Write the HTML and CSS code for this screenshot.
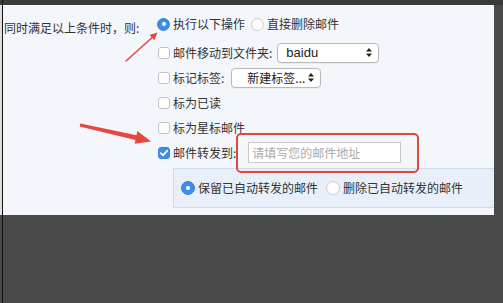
FILE: index.html
```html
<!DOCTYPE html>
<html lang="zh-CN">
<head>
<meta charset="utf-8">
<title>邮件规则</title>
<link rel="stylesheet" href="styles.css">
</head>
<body>
<div class="screen">
  <div class="gutter"><div class="gutter-top"></div><div class="gutter-mid"></div></div>
  <div class="frame">
    <div class="topbar"></div>
    <div class="panel">
      <div class="label">同时满足以上条件时，则:</div>
      <div class="actions">
        <div class="row row-first">
          <span class="radio checked"></span><span class="txt">执行以下操作</span>
          <span class="radio second"></span><span class="txt">直接删除邮件</span>
        </div>
        <div class="row">
          <span class="cb"></span><span class="txt">邮件移动到文件夹:</span>
          <span class="select sel-folder"><span class="sel-text">baidu</span><svg class="updown" width="6" height="9" viewBox="0 0 6 9"><path d="M3 0 L6 3.5 H0 Z M3 9 L6 5.5 H0 Z" fill="#222"/></svg></span>
        </div>
        <div class="row">
          <span class="cb"></span><span class="txt">标记标签:</span>
          <span class="select sel-tag"><span class="sel-text center">新建标签...</span><svg class="updown" width="6" height="9" viewBox="0 0 6 9"><path d="M3 0 L6 3.5 H0 Z M3 9 L6 5.5 H0 Z" fill="#222"/></svg></span>
        </div>
        <div class="row">
          <span class="cb"></span><span class="txt">标为已读</span>
        </div>
        <div class="row">
          <span class="cb"></span><span class="txt">标为星标邮件</span>
        </div>
        <div class="row">
          <span class="cb checked"><svg width="12" height="12" viewBox="0 0 12 12"><path d="M2.8 6.2 L5 8.4 L9.3 3.6" fill="none" stroke="#fff" stroke-width="1.7" stroke-linecap="round" stroke-linejoin="round"/></svg></span><span class="txt">邮件转发到:</span>
          <span class="input-wrap"><span class="input">请填写您的邮件地址</span></span>
        </div>
        <div class="subbox">
          <span class="radio checked"></span><span class="txt">保留已自动转发的邮件</span>
          <span class="radio second"></span><span class="txt">删除已自动转发的邮件</span>
        </div>
      </div>
    </div>
  </div>
  <svg class="arrows" width="503" height="303" viewBox="0 0 503 303">
    <line x1="126" y1="61" x2="152.5" y2="37.2" stroke="#e2463d" stroke-width="1.5" stroke-linecap="round"/>
    <polygon points="157.5,32.5 154.3,40.2 149.6,35.1" fill="#e2463d"/>
    <polygon points="80.3,123.6 136.5,135.3 137.4,131.0 151,141.5 134.6,143.8 135.5,140.1 79.7,126.4" fill="#e8473f"/>
  </svg>
</div>
</body>
</html>
```
FILE: styles.css
```css
html, body {
  margin: 0;
  padding: 0;
  background: #4a4a4a;
}

.screen {
  position: relative;
  display: flex;
  width: 503px;
  height: 303px;
  overflow: hidden;
  background: #4a4a4a;
  font-family: "Noto Sans CJK SC", "Noto Sans", sans-serif;
  font-size: 12px;
  color: #333;
}

.gutter {
  width: 2px;
  display: flex;
  flex-direction: column;
}
.gutter-top { height: 5px; background: #3a3a3a; }
.gutter-mid { height: 210px; background: #dedede; }

.frame {
  flex: 1;
  border-left: 1px solid #141414;
  display: flex;
  flex-direction: column;
}

.topbar {
  height: 5px;
  background: #3a3a3a;
}

.panel {
  width: 491px;
  height: 210px;
  background: #f3f6fb;
  display: flex;
  box-sizing: border-box;
  border-top: 1px solid #fbfcfe;
}

.label {
  width: 153px;
  padding-left: 1px;
  padding-top: 15px;
  line-height: 14px;
  white-space: nowrap;
}

.actions {
  flex: 1;
  display: flex;
  flex-direction: column;
  padding-top: 6px;
}

.row {
  height: 25px;
  display: flex;
  align-items: center;
  white-space: nowrap;
}
.row-first { height: 24px; margin-bottom: 4px; }

.txt {
  line-height: 14px;
}

.radio {
  width: 13px;
  height: 13px;
  box-sizing: border-box;
  border-radius: 50%;
  background: #fff;
  border: 1px solid #cfcfcf;
  box-shadow: inset 0 1px 1px rgba(0,0,0,0.06);
  margin-right: 3px;
  flex: none;
  display: flex;
  align-items: center;
  justify-content: center;
}
.radio.checked {
  background: #3d8fe6;
  border-color: #3a86d8;
}
.radio.checked::after {
  content: "";
  width: 4px;
  height: 4px;
  border-radius: 50%;
  background: #fff;
}
.radio.second { margin-left: 6px; }

.cb {
  width: 12px;
  height: 12px;
  box-sizing: border-box;
  border: 1px solid #c4c4c4;
  border-radius: 3px;
  background: #fff;
  margin-left: 1px;
  margin-right: 3px;
  flex: none;
  display: flex;
}
.cb.checked {
  background: #3d8fe6;
  border-color: #3a86d8;
}
.cb.checked svg { margin: -1px; }

.select {
  height: 20px;
  box-sizing: border-box;
  border: 1px solid #b9b9b9;
  border-radius: 4px;
  background: #fff;
  display: flex;
  align-items: center;
  padding: 0 6px 0 8px;
  margin-left: 5px;
  box-shadow: 0 1px 0 rgba(0,0,0,0.04);
}
.sel-folder { width: 102px; }
.sel-tag { width: 90px; margin-left: 7px; }
.sel-text {
  flex: 1;
  font-family: "Liberation Sans", "Noto Sans CJK SC", sans-serif;
  font-size: 13px;
  color: #222;
}
.sel-text.center {
  text-align: center;
  font-family: "Noto Sans CJK SC", sans-serif;
  font-size: 12px;
  padding-left: 4px;
}
.updown { flex: none; }

.input-wrap {
  position: relative;
  margin-left: 12px;
  display: flex;
}
.input {
  width: 153px;
  height: 21px;
  box-sizing: border-box;
  border: 1px solid #c9c9c9;
  background: #fff;
  color: #aaa;
  padding-left: 3px;
  line-height: 19px;
}
.input-wrap::after {
  content: "";
  position: absolute;
  left: -12px;
  top: -9px;
  right: -18px;
  bottom: -10px;
  border: 2px solid #e2463d;
  border-radius: 5px;
  pointer-events: none;
}

.subbox {
  margin-top: 3px;
  margin-left: 16px;
  height: 40px;
  box-sizing: border-box;
  border: 1px solid #d2dce8;
  border-right: none;
  background: #e8eff8;
  display: flex;
  align-items: center;
  padding-left: 7px;
  white-space: nowrap;
}
.subbox .radio { width: 14px; height: 14px; }
.subbox .radio.second { margin-left: 8px; }

.arrows {
  position: absolute;
  left: 0;
  top: 0;
  pointer-events: none;
}
```
